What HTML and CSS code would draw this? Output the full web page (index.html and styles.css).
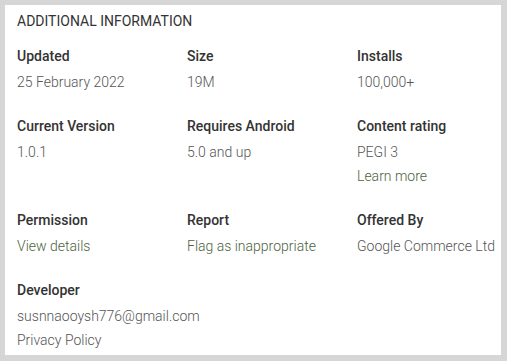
FILE: index.html
```html
<!DOCTYPE html>
<html lang="en">
<head>
    <meta charset="UTF-8">
    <title>Additional information</title>
    <link rel="stylesheet" href="styles.css">
</head>
<body>

    <div class="card">
        <h2>ADDITIONAL INFORMATION</h2>

        <div class="details">
            <div class="item">
                <div class="label">Updated</div>
                <div class="value">25 February 2022</div>
            </div>
            <div class="item">
                <div class="label">Size</div>
                <div class="value">19M</div>
            </div>
            <div class="item">
                <div class="label">Installs</div>
                <div class="value">100,000+</div>
            </div>

            <div class="item">
                <div class="label">Current Version</div>
                <div class="value">1.0.1</div>
            </div>
            <div class="item">
                <div class="label">Requires Android</div>
                <div class="value">5.0 and up</div>
            </div>
            <div class="item">
                <div class="label">Content rating</div>
                <div class="value">PEGI 3</div>
                <a class="value link" href="#">Learn more</a>
            </div>

            <div class="item">
                <div class="label">Permission</div>
                <a class="value link" href="#">View details</a>
            </div>
            <div class="item">
                <div class="label">Report</div>
                <a class="value link" href="#">Flag as inappropriate</a>
            </div>
            <div class="item">
                <div class="label">Offered By</div>
                <div class="value">Google Commerce Ltd</div>
            </div>

            <div class="item">
                <div class="label">Developer</div>
                <a class="value" href="#">susnnaooysh776@gmail.com</a>
                <a class="value" href="#">Privacy Policy</a>
            </div>
        </div>
    </div>

</body>
</html>
```

FILE: styles.css
```css
body {
    font-family: 'Roboto', 'Liberation Sans', sans-serif;
    background-color: #d6d6d6;
    color: #333;
    margin: 0;
    padding: 5px 6px 6px 5px;
}
.card {
    background-color: #fff;
    height: 350px;
    box-sizing: border-box;
    padding: 6px 12px 0;
}
h2 {
    font-size: 14px;
    font-weight: 400;
    line-height: 20px;
    margin: 0 0 15px;
    color: #333;
}
.details {
    display: grid;
    grid-template-columns: 170px 170px 1fr;
    row-gap: 22px;
}
.item {
    display: flex;
    flex-direction: column;
    align-items: flex-start;
}
.label {
    font-size: 14px;
    font-weight: 500;
    line-height: 20px;
    margin-bottom: 4px;
    color: #333;
}
.value {
    font-size: 14px;
    font-weight: 300;
    line-height: 24px;
    color: #555;
    text-decoration: none;
    white-space: nowrap;
}
.value.link {
    color: #4b6340;
}
```
